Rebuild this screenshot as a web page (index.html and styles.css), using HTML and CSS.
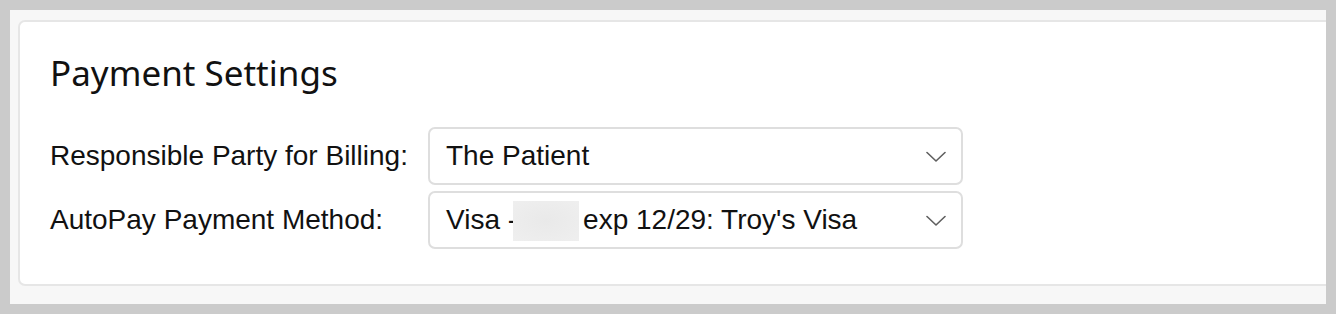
FILE: index.html
```html
<!DOCTYPE html>
<html lang="en">
<head>
<meta charset="utf-8">
<title>Payment Settings</title>
<link rel="stylesheet" href="styles.css">
</head>
<body>
<div class="frame">
  <section class="card">
    <h1 class="title">Payment Settings</h1>
    <div class="form">
      <label class="label">Responsible Party for Billing:</label>
      <div class="select">
        <span class="value">The Patient</span>
        <svg class="chev" width="20" height="12" viewBox="0 0 20 12"><polyline points="1,1.5 10,10 19,1.5" fill="none" stroke="#5f5f5f" stroke-width="1.6" stroke-linecap="round" stroke-linejoin="round"/></svg>
      </div>
      <label class="label">AutoPay Payment Method:</label>
      <div class="select">
        <span class="value">Visa -<span class="redact"></span>exp 12/29: Troy's Visa</span>
        <svg class="chev" width="20" height="12" viewBox="0 0 20 12"><polyline points="1,1.5 10,10 19,1.5" fill="none" stroke="#5f5f5f" stroke-width="1.6" stroke-linecap="round" stroke-linejoin="round"/></svg>
      </div>
    </div>
  </section>
</div>
</body>
</html>
```
FILE: styles.css
```css
html, body {
  margin: 0;
  padding: 0;
}
body {
  background: #cbcbcb;
  width: 1336px;
  height: 314px;
  overflow: hidden;
}
.frame {
  margin: 10px 0 0 10px;
  width: 1316px;
  height: 294px;
  background: #f7f7f7;
  overflow: hidden;
  padding-top: 10px;
  box-sizing: border-box;
}
.card {
  margin-left: 8px;
  width: 1340px;
  height: 266px;
  box-sizing: border-box;
  background: #ffffff;
  border: 2px solid #e6e6e6;
  border-radius: 7px;
  padding: 30px 0 0 30px;
}
.title {
  margin: 0;
  font-family: "Noto Sans", "Open Sans", sans-serif;
  font-weight: 400;
  font-size: 35px;
  line-height: 42px;
  color: #111111;
}
.form {
  margin-top: 33px;
  display: grid;
  grid-template-columns: 378px 535px;
  row-gap: 6px;
  align-items: center;
}
.label {
  font-family: "Liberation Sans", Arial, sans-serif;
  font-size: 28px;
  color: #111111;
  line-height: 32px;
}
.select {
  height: 58px;
  box-sizing: border-box;
  border: 2px solid #dedede;
  border-radius: 7px;
  display: flex;
  align-items: center;
  justify-content: space-between;
  padding: 0 15px 0 16px;
  font-family: "Liberation Sans", Arial, sans-serif;
  font-size: 28px;
  color: #111111;
}
.value {
  display: flex;
  align-items: center;
  white-space: pre;
}
.redact {
  display: inline-block;
  width: 66px;
  height: 40px;
  margin: 2px 4px 0 -4px;
  background: radial-gradient(ellipse at center, #e9e9e9 0%, #efefef 100%);
}
.chev {
  display: block;
  margin-top: 2px;
}
```
